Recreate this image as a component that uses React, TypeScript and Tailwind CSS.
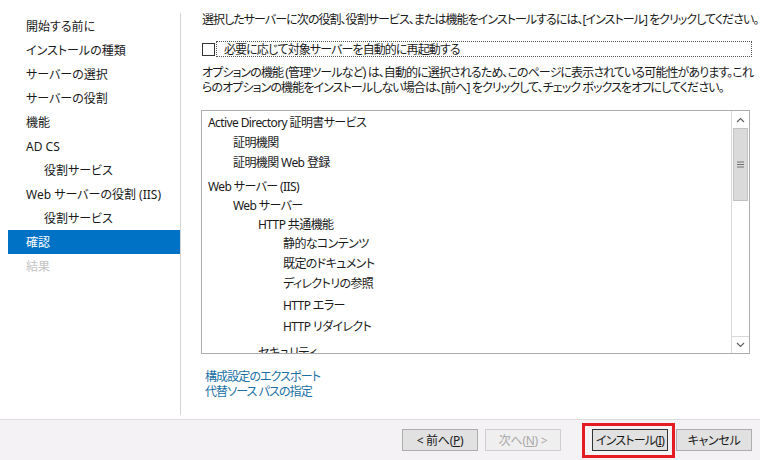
import React from "react";

const nav: { label: string; indent?: boolean; active?: boolean; disabled?: boolean }[] = [
  { label: "開始する前に" },
  { label: "インストールの種類" },
  { label: "サーバーの選択" },
  { label: "サーバーの役割" },
  { label: "機能" },
  { label: "AD CS" },
  { label: "役割サービス", indent: true },
  { label: "Web サーバーの役割 (IIS)" },
  { label: "役割サービス", indent: true },
  { label: "確認", active: true },
  { label: "結果", disabled: true },
];

const items: { label: string; cls: string }[] = [
  { label: "Active Directory 証明書サービス", cls: "pl-[6px] h-[20px]" },
  { label: "証明機関", cls: "pl-[31px] h-[20px]" },
  { label: "証明機関 Web 登録", cls: "pl-[31px] h-[20px]" },
  { label: "Web サーバー (IIS)", cls: "pl-[6px] h-[24px] pt-[4px]" },
  { label: "Web サーバー", cls: "pl-[31px] h-[19px]" },
  { label: "HTTP 共通機能", cls: "pl-[56px] h-[18px]" },
  { label: "静的なコンテンツ", cls: "pl-[81px] h-[20px]" },
  { label: "既定のドキュメント", cls: "pl-[81px] h-[20px]" },
  { label: "ディレクトリの参照", cls: "pl-[81px] h-[21px]" },
  { label: "HTTP エラー", cls: "pl-[81px] h-[22px]" },
  { label: "HTTP リダイレクト", cls: "pl-[81px] h-[21px]" },
  { label: "セキュリティ", cls: "pl-[56px] h-[30px] shrink-0" },
];

export default function App() {
  return (
    <div
      className="w-[760px] h-[460px] bg-white flex flex-col overflow-hidden text-[12px] leading-[15px] text-[#1a1a1a] [font-feature-settings:'palt'] [font-family:'Noto_Sans','Noto_Sans_CJK_JP',sans-serif]"
    >
      <div className="flex flex-1 min-h-0">
        {/* sidebar */}
        <div className="w-[181px] shrink-0 pt-[13px] pb-[4px] flex flex-col">
          <div className="flex-1 border-r border-[#d4d4d4] pl-[8px] pt-[1px]">
            {nav.map((n, i) => (
              <div
                key={i}
                className={
                  "h-[24px] flex items-center whitespace-nowrap " +
                  (n.indent ? "pl-[36px] " : "pl-[18px] ") +
                  (n.active ? "bg-[#0072c6] text-white " : "") +
                  (n.disabled ? "text-[#c4c4c4] " : "")
                }
              >
                {n.label}
              </div>
            ))}
          </div>
        </div>
        {/* main */}
        <div className="flex-1 min-w-0 pl-[21px] pr-[8px] pt-[12px] flex flex-col">
          <div className="tracking-[-0.95px] whitespace-nowrap">
            選択したサーバーに次の役割、役割サービス、または機能をインストールするには、[インストール] をクリックしてください。
          </div>
          <div className="mt-[14px] flex items-center h-[16px]">
            <div className="w-[13px] h-[13px] border border-[#333] bg-white shrink-0" />
            <div className="ml-[1px] flex-1 h-[16px] border border-dotted border-[#555] pl-[7px] flex items-center tracking-[-0.9px] whitespace-nowrap">
              必要に応じて対象サーバーを自動的に再起動する
            </div>
          </div>
          <div className="mt-[8px] tracking-[-0.9px] whitespace-nowrap">
            オプションの機能 (管理ツールなど) は、自動的に選択されるため、このページに表示されている可能性があります。これ
            <br />
            らのオプションの機能をインストールしない場合は、[前へ] をクリックして、チェック ボックスをオフにしてください。
          </div>
          <div className="mt-[15px] -ml-[1px] h-[244px] w-[549px] border border-[#acacac] flex overflow-hidden">
            <div className="flex-1 pt-[1px] overflow-hidden tracking-[-0.6px] flex flex-col">
              {items.map((it, i) => (
                <div key={i} className={"flex items-center whitespace-nowrap shrink-0 " + it.cls}>
                  {it.label}
                </div>
              ))}
            </div>
            <div className="w-[18px] shrink-0 border-l border-[#d9d9d9] flex flex-col">
              <div className="h-[17px] flex items-center justify-center">
                <svg width="9" height="6" viewBox="0 0 9 6">
                  <path d="M1 5 L4.5 1.5 L8 5" fill="none" stroke="#606060" strokeWidth="1.2" />
                </svg>
              </div>
              <div className="mx-[1px] h-[73px] bg-[#dadada] border border-[#c2c2c2] flex items-center justify-center">
                <svg width="7" height="7" viewBox="0 0 7 7">
                  <rect x="0" y="0.5" width="7" height="1" fill="#707070" />
                  <rect x="0" y="3" width="7" height="1" fill="#707070" />
                  <rect x="0" y="5.5" width="7" height="1" fill="#707070" />
                </svg>
              </div>
              <div className="flex-1" />
              <div className="h-[17px] border-t border-[#d9d9d9] flex items-center justify-center">
                <svg width="9" height="6" viewBox="0 0 9 6">
                  <path d="M1 1 L4.5 4.5 L8 1" fill="none" stroke="#606060" strokeWidth="1.2" />
                </svg>
              </div>
            </div>
          </div>
          <div className="mt-[15px] pl-[3px] text-[#1a6fa3] leading-[15px] tracking-[-0.9px]">
            <div>構成設定のエクスポート</div>
            <div>代替ソース パスの指定</div>
          </div>
        </div>
      </div>
      {/* footer */}
      <div className="h-[41px] shrink-0 border-t border-[#dcdcdc] bg-[#f4f2f5] flex items-center justify-end pr-[8px] tracking-[-0.3px] whitespace-nowrap">
        <button className="w-[76px] h-[22px] bg-[#e1e1e1] border border-[#adadad] flex items-center justify-center">
          &lt;&nbsp;前へ(<span className="underline">P</span>)
        </button>
        <button className="ml-[7px] w-[76px] h-[22px] bg-[#f0eff0] border border-[#cfcfcf] text-[#a8a8a8] flex items-center justify-center">
          次へ(<span className="underline">N</span>)&nbsp;&gt;
        </button>
        <div className="ml-[21px] border-[3px] border-[#e51b24] w-[93px] h-[35px] flex items-center pl-[7px]">
          <button className="w-[76px] h-[22px] bg-[#e1e1e1] border border-[#333] flex items-center justify-center tracking-[-0.8px]">
            インストール(<span className="underline">I</span>)
          </button>
        </div>
        <button className="ml-[1px] w-[76px] h-[22px] bg-[#e1e1e1] border border-[#adadad] flex items-center justify-center">
          キャンセル
        </button>
      </div>
    </div>
  );
}
